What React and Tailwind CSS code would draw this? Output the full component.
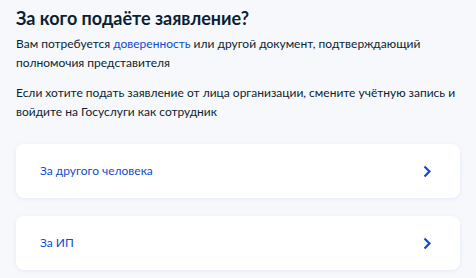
import React from 'react';

const options = ['За другого человека', 'За ИП'];

function Chevron() {
  return (
    <svg width="8" height="13" viewBox="0 0 8 13" fill="none">
      <path d="M1.5 1.5L6.5 6.5L1.5 11.5" stroke="#0d4cd3" strokeWidth="2.2" />
    </svg>
  );
}

export default function App() {
  return (
    <div className="min-h-screen bg-[#f6f8fc] px-4 pt-[6px] text-[#0b1f33] font-['Lato','Liberation_Sans',sans-serif]">
      <h1 className="text-[18px] leading-[24px] font-bold">За кого подаёте заявление?</h1>
      <p className="mt-[5px] text-[12px] leading-[18.5px]">
        Вам потребуется <span className="text-[#0d4cd3]">доверенность</span> или другой документ, подтверждающий
        <br />
        полномочия представителя
      </p>
      <p className="mt-[12px] text-[12px] leading-[18.5px]">
        Если хотите подать заявление от лица организации, смените учётную запись и
        <br />
        войдите на Госуслуги как сотрудник
      </p>
      <div className="mt-[23px] flex flex-col gap-[18px]">
        {options.map(o => (
          <div
            key={o}
            className="h-[54px] bg-white rounded-[8px] shadow-[0_1px_4px_rgba(0,60,180,0.08)] flex items-center justify-between pl-6 pr-[29px]"
          >
            <span className="text-[12px] text-[#0d4cd3]">{o}</span>
            <Chevron />
          </div>
        ))}
      </div>
    </div>
  );
}
